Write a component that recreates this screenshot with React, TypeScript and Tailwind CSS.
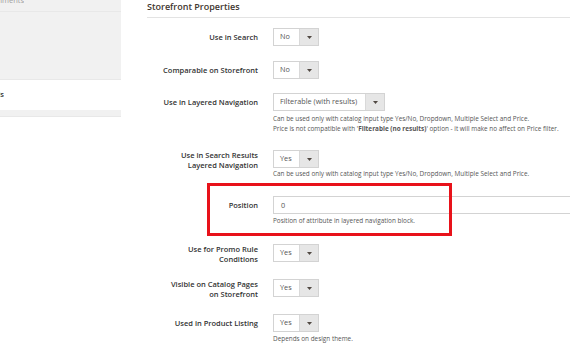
import React from "react";

const Arrow = () => (
  <svg width="5" height="3" viewBox="0 0 5 3" className="block">
    <path d="M0 0 L5 0 L2.5 3 Z" fill="#514943" />
  </svg>
);

function Select({ value, textW }: { value: string; textW: number }) {
  return (
    <div className="flex h-[18px] border border-[#d3d3d3] bg-white">
      <div
        className="flex items-center pl-[6px] text-[7.3px] text-[#555] leading-none"
        style={{ width: textW }}
      >
        {value}
      </div>
      <div className="w-[19px] flex items-center justify-center bg-[#e6e6e6] border-l border-[#d9d9d9]">
        <Arrow />
      </div>
    </div>
  );
}

function Label({ children, two }: { children: React.ReactNode; two?: boolean }) {
  return (
    <div
      className={`w-[111px] shrink-0 text-right text-[7.5px] font-semibold leading-[10px] text-[#333] ${
        two ? "pt-0" : "pt-[4px]"
      }`}
    >
      {children}
    </div>
  );
}

function Note({ children, mt }: { children: React.ReactNode; mt: string }) {
  return (
    <div className={`${mt} text-[6.4px] leading-[10px] text-[#555] whitespace-nowrap`}>{children}</div>
  );
}

export default function App() {
  return (
    <div
      className="w-[570px] h-[350px] overflow-hidden bg-white flex"
      style={{ fontFamily: '"Open Sans", sans-serif' }}
    >
      {/* sidebar */}
      <div className="w-[121px] shrink-0 flex flex-col">
        <div className="h-[80px] bg-[#f1f1f1] border-b border-[#e8e8e8] flex flex-col">
          <div className="h-[12px] border-b border-[#e8e8e8] overflow-hidden">
            <div className="w-[24px] overflow-hidden flex justify-end mt-[-5px]">
              <span className="whitespace-nowrap text-[7.5px] leading-[10px] text-[#a0a0a0]">
                Attachments
              </span>
            </div>
          </div>
        </div>
        <div className="mt-[9px] w-[4px] overflow-hidden flex justify-end">
          <span className="whitespace-nowrap text-[7.5px] font-semibold leading-[10px] text-[#303030]">
            Labels
          </span>
        </div>
        <div className="mt-[11px] h-[7px] bg-[#f1f1f1] border-b border-[#e8e8e8]" />
      </div>

      {/* main */}
      <div className="ml-[26px] flex-1 flex flex-col">
        <div className="h-[18px] border-b border-[#e3e3e3] text-[9px] font-semibold leading-[14px] text-[#41362f]">
          Storefront Properties
        </div>

        <div className="mt-[10px] flex gap-[15px]">
          <Label>Use in Search</Label>
          <Select value="No" textW={25} />
        </div>

        <div className="mt-[15px] flex gap-[15px]">
          <Label>Comparable on Storefront</Label>
          <Select value="No" textW={25} />
        </div>

        <div className="mt-[14px] flex gap-[15px]">
          <Label>Use in Layered Navigation</Label>
          <div className="flex flex-col items-start">
            <Select value="Filterable (with results)" textW={91} />
            <Note mt="mt-[3px]">
              Can be used only with catalog input type Yes/No, Dropdown, Multiple Select and Price.
              <br />
              Price is not compatible with '<b>Filterable (no results)</b>' option - it will make no affect on
              Price filter.
            </Note>
          </div>
        </div>

        <div className="mt-[16px] flex gap-[15px]">
          <Label two>
            Use in Search Results
            <br />
            Layered Navigation
          </Label>
          <div className="flex flex-col items-start">
            <Select value="Yes" textW={25} />
            <Note mt="mt-[1px]">
              Can be used only with catalog input type Yes/No, Dropdown, Multiple Select and Price.
            </Note>
          </div>
        </div>

        <div className="mt-[17px] flex gap-[15px] relative">
          <Label>Position</Label>
          <div className="flex-1 flex flex-col">
            <div className="h-[18px] border border-[#d3d3d3] border-r-0 flex items-center pl-[7px] text-[7.3px] text-[#555]">
              0
            </div>
            <Note mt="mt-[2px]">Position of attribute in layered navigation block.</Note>
          </div>
          <div className="absolute left-[60px] top-[-13px] w-[245px] h-[53px] border-[3px] border-[#e8121a]" />
        </div>

        <div className="mt-[18px] flex gap-[15px]">
          <Label two>
            Use for Promo Rule
            <br />
            Conditions
          </Label>
          <Select value="Yes" textW={25} />
        </div>

        <div className="mt-[15px] flex gap-[15px]">
          <Label two>
            Visible on Catalog Pages
            <br />
            on Storefront
          </Label>
          <Select value="Yes" textW={25} />
        </div>

        <div className="mt-[15px] flex gap-[15px]">
          <Label>Used in Product Listing</Label>
          <div className="flex flex-col items-start">
            <Select value="Yes" textW={25} />
            <Note mt="mt-[2px]">Depends on design theme.</Note>
          </div>
        </div>
      </div>
    </div>
  );
}
